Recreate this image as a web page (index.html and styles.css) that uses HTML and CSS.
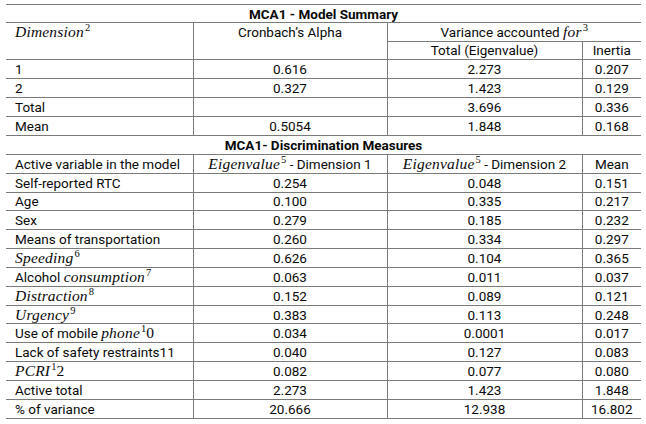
FILE: index.html
```html
<!DOCTYPE html>
<html>
<head>
<meta charset="utf-8">
<link rel="stylesheet" href="styles.css">
</head>
<body>
<table class="tbl">
  <colgroup>
    <col class="c1"><col class="c2"><col class="c3"><col class="c4">
  </colgroup>
  <tbody class="top">
    <tr class="title"><td colspan="4">MCA1 - Model Summary</td></tr>
    <tr class="h1">
      <td rowspan="2" class="l vtop"><span class="m">Dimension</span><sup class="ms">2</sup></td>
      <td rowspan="2" class="vtop">Cronbach’s Alpha</td>
      <td colspan="2">Variance accounted <span class="m">for</span><sup class="ms">3</sup></td>
    </tr>
    <tr class="h2"><td>Total (Eigenvalue)</td><td>Inertia</td></tr>
    <tr><td class="l">1</td><td>0.616</td><td>2.273</td><td>0.207</td></tr>
    <tr><td class="l">2</td><td>0.327</td><td>1.423</td><td>0.129</td></tr>
    <tr><td class="l">Total</td><td></td><td>3.696</td><td>0.336</td></tr>
    <tr><td class="l">Mean</td><td>0.5054</td><td>1.848</td><td>0.168</td></tr>
  </tbody>
  <tbody class="bot">
    <tr class="title"><td colspan="4">MCA1- Discrimination Measures</td></tr>
    <tr><td class="l">Active variable in the model</td><td><span class="m">Eigenvalue</span><sup class="ms">5</sup> - Dimension 1</td><td><span class="m">Eigenvalue</span><sup class="ms">5</sup> - Dimension 2</td><td>Mean</td></tr>
    <tr><td class="l">Self-reported RTC</td><td>0.254</td><td>0.048</td><td>0.151</td></tr>
    <tr><td class="l">Age</td><td>0.100</td><td>0.335</td><td>0.217</td></tr>
    <tr><td class="l">Sex</td><td>0.279</td><td>0.185</td><td>0.232</td></tr>
    <tr><td class="l">Means of transportation</td><td>0.260</td><td>0.334</td><td>0.297</td></tr>
    <tr><td class="l"><span class="m">Speeding</span><sup class="ms">6</sup></td><td>0.626</td><td>0.104</td><td>0.365</td></tr>
    <tr><td class="l">Alcohol <span class="m">consumption</span><sup class="ms">7</sup></td><td>0.063</td><td>0.011</td><td>0.037</td></tr>
    <tr><td class="l"><span class="m">Distraction</span><sup class="ms">8</sup></td><td>0.152</td><td>0.089</td><td>0.121</td></tr>
    <tr><td class="l"><span class="m">Urgency</span><sup class="ms">9</sup></td><td>0.383</td><td>0.113</td><td>0.248</td></tr>
    <tr><td class="l">Use of mobile <span class="m">phone</span><sup class="ms">1</sup><span class="mr">0</span></td><td>0.034</td><td>0.0001</td><td>0.017</td></tr>
    <tr><td class="l">Lack of safety restraints11</td><td>0.040</td><td>0.127</td><td>0.083</td></tr>
    <tr><td class="l"><span class="m">PCRI</span><sup class="ms">1</sup><span class="mr">2</span></td><td>0.082</td><td>0.077</td><td>0.080</td></tr>
    <tr><td class="l">Active total</td><td>2.273</td><td>1.423</td><td>1.848</td></tr>
    <tr><td class="l">% of variance</td><td>20.666</td><td>12.938</td><td>16.802</td></tr>
  </tbody>
</table>
</body>
</html>
```

FILE: styles.css
```css
html, body {
  margin: 0;
  padding: 0;
  background: #ffffff;
}
body {
  padding: 4px 5px 0 6px;
  font-family: Roboto, "Liberation Sans", sans-serif;
  font-size: 13.5px;
  color: #0a0a0a;
}
.tbl {
  border-collapse: collapse;
  table-layout: fixed;
  width: 635px;
}
.c1 { width: 187px; }
.c2 { width: 194px; }
.c3 { width: 195px; }
.c4 { width: 59px; }
.tbl td {
  border: 1px solid #7a7a7a;
  padding: 0 8px;
  line-height: 16px;
  text-align: center;
  white-space: nowrap;
  vertical-align: middle;
  overflow: hidden;
}
.top tr td { height: 18px; }
.top tr.h1 td, .top tr.h2 td { height: 17.5px; }
.tbl tr > td:first-child { border-left: none; }
.tbl tr > td:last-child { border-right: none; }
.tbl td[rowspan] { border-right: 1px solid #7a7a7a; }
.tbl td.l { text-align: left; padding-left: 9px; }
.tbl td.vtop { vertical-align: top; padding-top: 1px; }
.tbl tr.title td {
  font-weight: 700;
  border-left: none;
  border-right: none;
}
.top tr.title td { height: 17px; }
.bot tr td { height: 17.85px; }
.m {
  font-family: "Liberation Serif", "DejaVu Serif", serif;
  font-style: italic;
  font-size: 15.5px;
  letter-spacing: 0.2px;
}
.mr {
  font-family: "Liberation Serif", "DejaVu Serif", serif;
  font-size: 15.5px;
}
.ms {
  font-family: "Liberation Serif", "DejaVu Serif", serif;
  font-size: 10.5px;
  line-height: 0;
  vertical-align: 6px;
  margin-left: 1px;
}
```
